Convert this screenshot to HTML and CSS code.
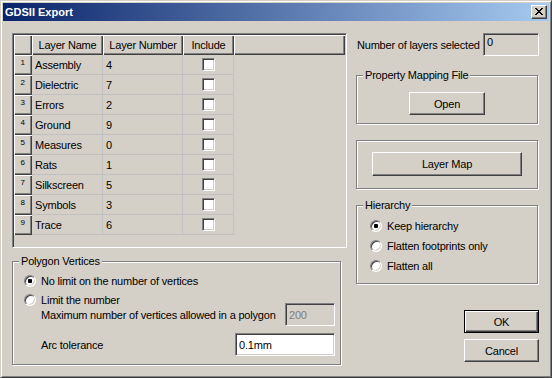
FILE: index.html
```html
<!DOCTYPE html>
<html lang="en">
<head>
  <meta charset="UTF-8" />
  <title>GDSII Export</title>
  <link rel="stylesheet" href="styles.css">
</head>
<body>
  <div class="window">
    <div class="titlebar">
      <span class="title">GDSII Export</span>
      <span class="close">
        <svg width="8" height="7" viewBox="0 0 8 7" shape-rendering="crispEdges"><path d="M0 0h2v1H0zM6 0h2v1H6zM1 1h2v1H1zM5 1h2v1H5zM2 2h4v1H2zM3 3h2v1H3zM2 4h4v1H2zM1 5h2v1H1zM5 5h2v1H5zM0 6h2v1H0zM6 6h2v1H6z" fill="#000"/></svg>
      </span>
    </div>

    <div class="dialog">
      <div class="left-col">
        <div class="layer-grid">
          <div class="grid-row">
            <div class="hcell"></div>
            <div class="hcell">Layer Name</div>
            <div class="hcell">Layer Number</div>
            <div class="hcell">Include</div>
            <div class="hcell"></div>
          </div>
          <div class="grid-row">
            <div class="hcell rownum">1</div>
            <div class="cell">Assembly</div>
            <div class="cell">4</div>
            <div class="cell check"><span class="checkbox"></span></div>
          </div>
          <div class="grid-row">
            <div class="hcell rownum">2</div>
            <div class="cell">Dielectric</div>
            <div class="cell">7</div>
            <div class="cell check"><span class="checkbox"></span></div>
          </div>
          <div class="grid-row">
            <div class="hcell rownum">3</div>
            <div class="cell">Errors</div>
            <div class="cell">2</div>
            <div class="cell check"><span class="checkbox"></span></div>
          </div>
          <div class="grid-row">
            <div class="hcell rownum">4</div>
            <div class="cell">Ground</div>
            <div class="cell">9</div>
            <div class="cell check"><span class="checkbox"></span></div>
          </div>
          <div class="grid-row">
            <div class="hcell rownum">5</div>
            <div class="cell">Measures</div>
            <div class="cell">0</div>
            <div class="cell check"><span class="checkbox"></span></div>
          </div>
          <div class="grid-row">
            <div class="hcell rownum">6</div>
            <div class="cell">Rats</div>
            <div class="cell">1</div>
            <div class="cell check"><span class="checkbox"></span></div>
          </div>
          <div class="grid-row">
            <div class="hcell rownum">7</div>
            <div class="cell">Silkscreen</div>
            <div class="cell">5</div>
            <div class="cell check"><span class="checkbox"></span></div>
          </div>
          <div class="grid-row">
            <div class="hcell rownum">8</div>
            <div class="cell">Symbols</div>
            <div class="cell">3</div>
            <div class="cell check"><span class="checkbox"></span></div>
          </div>
          <div class="grid-row">
            <div class="hcell rownum">9</div>
            <div class="cell">Trace</div>
            <div class="cell">6</div>
            <div class="cell check"><span class="checkbox"></span></div>
          </div>
        </div>

        <div class="group polygon">
          <span class="group-label">Polygon Vertices</span>
          <div class="option first"><span class="radio on"></span>No limit on the number of vertices</div>
          <div class="option"><span class="radio"></span>Limit the number</div>
          <div class="field-row max-row">
            <span>Maximum number of vertices allowed in a polygon</span>
            <div class="field disabled small">200</div>
          </div>
          <div class="field-row arc-row">
            <span>Arc tolerance</span>
            <div class="field wide">0.1mm</div>
          </div>
        </div>
      </div>

      <div class="right-col">
        <div class="count-row">
          <span>Number of layers selected</span>
          <div class="field readonly">0</div>
        </div>

        <div class="group mapping">
          <span class="group-label">Property Mapping File</span>
          <button class="btn open-btn">Open</button>
        </div>

        <div class="group layermap">
          <button class="btn layermap-btn">Layer Map</button>
        </div>

        <div class="group hierarchy">
          <span class="group-label">Hierarchy</span>
          <div class="option first"><span class="radio on"></span>Keep hierarchy</div>
          <div class="option"><span class="radio"></span>Flatten footprints only</div>
          <div class="option"><span class="radio"></span>Flatten all</div>
        </div>

        <div class="actions">
          <button class="btn default">OK</button>
          <button class="btn">Cancel</button>
        </div>
      </div>
    </div>
  </div>
</body>
</html>
```

FILE: styles.css
```css
body {
  margin: 0;
  font-family: "Liberation Sans", Arial, sans-serif;
  font-size: 11px;
  color: #000;
}

.window {
  width: 552px;
  height: 378px;
  box-sizing: border-box;
  background: #d4d0c8;
  border: 1px solid;
  border-color: #d4d0c8 #404040 #404040 #d4d0c8;
  box-shadow: inset 1px 1px #fff, inset -1px -1px #808080;
  padding: 2px;
  display: flex;
  flex-direction: column;
}

.titlebar {
  height: 18px;
  flex-shrink: 0;
  display: flex;
  align-items: center;
  justify-content: space-between;
  padding: 0 2px 0 2px;
  background: linear-gradient(to right, #0a246a, #a6caf0);
}

.title {
  color: #fff;
  font-weight: bold;
}

.close {
  width: 16px;
  height: 14px;
  box-sizing: border-box;
  background: #d4d0c8;
  border: 1px solid;
  border-color: #fff #404040 #404040 #fff;
  box-shadow: inset -1px -1px #808080;
  display: flex;
  align-items: center;
  justify-content: center;
  padding: 0 1px 1px 0;
}

.dialog {
  flex: 1;
  display: flex;
  gap: 9px;
  padding: 12px 10px 0 9px;
  letter-spacing: -0.2px;
}

.left-col {
  width: 335px;
}

.right-col {
  width: 183px;
  display: flex;
  flex-direction: column;
}

/* layer table */
.layer-grid {
  height: 215px;
  box-sizing: border-box;
  border: 1px solid;
  border-color: #808080 #fff #fff #808080;
  box-shadow: inset 1px 1px #404040, inset -1px -1px #d4d0c8;
  padding: 1px;
}

.grid-row {
  display: grid;
  grid-template-columns: 18px 71px 80px 51px 111px;
  height: 20px;
}

.hcell {
  box-shadow: inset 1px 1px #fff, inset -1px -1px #404040, inset -2px -2px #808080;
  display: flex;
  align-items: center;
  justify-content: center;
  padding-bottom: 1px;
  box-sizing: border-box;
}

.rownum {
  font-size: 8px;
  align-items: flex-start;
  padding: 3px 1px 0 0;
  line-height: 10px;
}

.cell {
  box-sizing: border-box;
  border-right: 1px solid #c0c0c0;
  border-bottom: 1px solid #c0c0c0;
  padding-left: 3px;
  display: flex;
  align-items: center;
}

.cell.check {
  justify-content: center;
  padding-left: 0;
}

.checkbox {
  width: 13px;
  height: 13px;
  box-sizing: border-box;
  background: #fff;
  border: 1px solid;
  border-color: #808080 #fff #fff #808080;
  box-shadow: inset 1px 1px #404040, inset -1px -1px #d4d0c8;
}

/* group boxes */
.group {
  box-sizing: border-box;
  border: 1px solid #808080;
  box-shadow: inset 1px 1px #fff, 1px 1px #fff;
}

.group-label {
  display: block;
  width: fit-content;
  margin: -7px 0 0 6px;
  padding: 0 2px;
  line-height: 13px;
  background: #d4d0c8;
}

.option {
  display: flex;
  align-items: center;
  gap: 5px;
  height: 20px;
}

.radio {
  width: 12px;
  height: 12px;
  box-sizing: border-box;
  border-radius: 50%;
  border: 1px solid;
  border-color: #808080 #fff #fff #808080;
  background: #fff;
  box-shadow: inset 1px 1px #404040, inset -1px -1px #d4d0c8;
}

.radio.on {
  background: radial-gradient(circle, #000 2px, #fff 2.5px);
}

.polygon {
  width: 329px;
  height: 104px;
  margin-top: 13px;
}

.polygon .option {
  height: 19px;
  padding-left: 11px;
}

.polygon .option.first {
  margin-top: 3px;
}

.field-row {
  display: flex;
  align-items: center;
  justify-content: space-between;
  padding: 0 5px 0 28px;
}

.max-row {
  margin-top: -6px;
}

.arc-row {
  margin-top: 7px;
}

.field {
  height: 23px;
  box-sizing: border-box;
  border: 1px solid;
  border-color: #808080 #fff #fff #808080;
  box-shadow: inset 1px 1px #404040, inset -1px -1px #d4d0c8;
  background: #fff;
  padding: 0 3px;
  display: flex;
  align-items: center;
}

.field.small {
  width: 50px;
}

.field.wide {
  width: 100px;
}

.field.disabled {
  background: #d4d0c8;
  color: #808080;
}

.field.readonly {
  width: 56px;
  background: #d4d0c8;
  align-items: flex-start;
  padding-top: 2px;
}

.count-row {
  display: flex;
  align-items: center;
  justify-content: space-between;
  padding-left: 1px;
}

/* buttons */
.btn {
  font: inherit;
  letter-spacing: inherit;
  color: #000;
  height: 23px;
  box-sizing: border-box;
  background: #d4d0c8;
  border: 1px solid;
  border-color: #fff #404040 #404040 #fff;
  box-shadow: inset -1px -1px #808080;
  padding: 0;
}

.btn.default {
  border: 1px solid #000;
  box-shadow: inset 1px 1px #fff, inset -1px -1px #404040, inset -2px -2px #808080;
}

.mapping {
  width: 182px;
  height: 49px;
  margin-top: 19px;
  display: flex;
  flex-direction: column;
  align-items: center;
}

.mapping .group-label {
  align-self: flex-start;
}

.open-btn {
  width: 76px;
  margin-top: 10px;
}

.layermap {
  width: 182px;
  height: 49px;
  margin-top: 16px;
  display: flex;
  justify-content: center;
  padding-top: 11px;
}

.layermap-btn {
  width: 150px;
  height: 24px;
}

.hierarchy {
  width: 182px;
  height: 79px;
  margin-top: 16px;
}

.hierarchy .option {
  padding-left: 13px;
}

.hierarchy .option.first {
  margin-top: 4px;
}

.actions {
  margin-top: 26px;
  display: flex;
  flex-direction: column;
  align-items: flex-end;
  gap: 6px;
}

.actions .btn {
  width: 75px;
}
```
